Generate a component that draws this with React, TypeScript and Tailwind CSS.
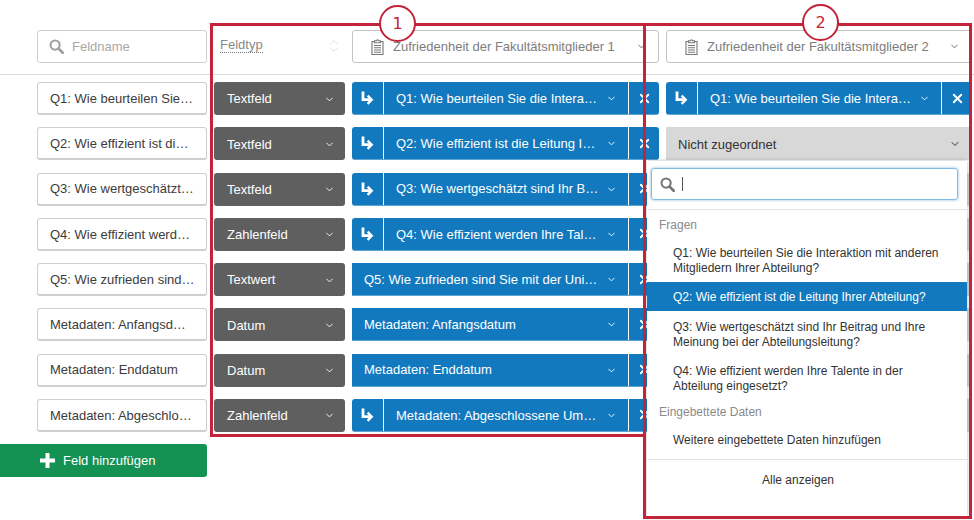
import React from "react";
import { ChevronDown, ChevronsUpDown, X } from "lucide-react";

const Search = ({ c = "#a0a0a0", s = 15 }: { c?: string; s?: number }) => (
  <svg width={s} height={s} viewBox="0 0 16 16" fill="none" stroke={c}>
    <circle cx="6.5" cy="6.5" r="4.9" strokeWidth="2.2" />
    <path d="M10 10l4.6 4.6" strokeWidth="3" strokeLinecap="round" />
  </svg>
);

const Clip = () => (
  <svg width="13" height="16" viewBox="0 0 13 16" fill="none" stroke="#777" strokeWidth="1.1" className="shrink-0">
    <path d="M3.5 2.5H1v13h11v-13H9.5" />
    <path d="M3.5 3.8V1.8h2a1 1 0 0 1 2 0h2v2z" />
    <path d="M3 6.5h7M3 8.8h7M3 11h7M3 13.2h7" />
  </svg>
);

const Arrow = () => (
  <svg width="13" height="14" viewBox="0 0 13 14" fill="none" stroke="white">
    <path d="M2 0.5v8.2h8" strokeWidth="2.8" />
    <path d="M6.6 4.6l4.1 4.1-4.1 4.1" strokeWidth="2.4" />
  </svg>
);

const Mapped = ({ text, icon, className }: { text: string; icon: boolean; className: string }) => (
  <div className={`shrink-0 h-[33px] flex bg-[#1279be] text-white border-b border-[#5da3d3] ${icon ? "rounded-[3px]" : ""} ${className}`}>
    {icon && (
      <div className="w-[32px] shrink-0 flex items-center justify-center border-r border-white">
        <Arrow />
      </div>
    )}
    <div className="flex-1 min-w-0 flex items-center pl-[12px] pr-[11px] pt-[1px]">
      <span className="flex-1 whitespace-nowrap">{text}</span>
      <ChevronDown size={11} strokeWidth={2} className="shrink-0 ml-2" />
    </div>
    <div className="w-[31px] shrink-0 flex items-center justify-center border-l border-white">
      <X size={15} strokeWidth={3} />
    </div>
  </div>
);

const rows: { name: string; type: string; text: string; icon: boolean; second?: string }[] = [
  { name: "Q1: Wie beurteilen Sie…", type: "Textfeld", text: "Q1: Wie beurteilen Sie die Intera…", icon: true, second: "Q1: Wie beurteilen Sie die Intera…" },
  { name: "Q2: Wie effizient ist di…", type: "Textfeld", text: "Q2: Wie effizient ist die Leitung I…", icon: true },
  { name: "Q3: Wie wertgeschätzt…", type: "Textfeld", text: "Q3: Wie wertgeschätzt sind Ihr B…", icon: true },
  { name: "Q4: Wie effizient werd…", type: "Zahlenfeld", text: "Q4: Wie effizient werden Ihre Tal…", icon: true },
  { name: "Q5: Wie zufrieden sind…", type: "Textwert", text: "Q5: Wie zufrieden sind Sie mit der Uni…", icon: false },
  { name: "Metadaten: Anfangsd…", type: "Datum", text: "Metadaten: Anfangsdatum", icon: false },
  { name: "Metadaten: Enddatum", type: "Datum", text: "Metadaten: Enddatum", icon: false },
  { name: "Metadaten: Abgeschlo…", type: "Zahlenfeld", text: "Metadaten: Abgeschlossene Um…", icon: true },
];

const Source = ({ label, className }: { label: string; className: string }) => (
  <div className={`shrink-0 h-[33px] border border-[#c4c4c4] rounded-[3px] flex items-center pl-[18px] pr-[11px] text-[#7d7d7d] ${className}`}>
    <Clip />
    <span className="ml-[9px] flex-1 whitespace-nowrap">{label}</span>
    <ChevronDown size={11} strokeWidth={2} className="shrink-0 text-[#666]" />
  </div>
);

const Item = ({ children, active, className }: { children: React.ReactNode; active?: boolean; className: string }) => (
  <div className={`pl-[26px] pr-[20px] text-[12px] leading-[15px] ${active ? "bg-[#1279be] text-white" : "text-[#333]"} ${className}`}>
    {children}
  </div>
);

const Badge = ({ n, className }: { n: string; className: string }) => (
  <div className={`absolute w-[37px] h-[37px] rounded-full border-[2.5px] border-[#c3243a] bg-white flex items-center justify-center text-[#c3243a] text-[16px] font-['DejaVu_Sans',sans-serif] ${className}`}>
    {n}
  </div>
);

export default function App() {
  return (
    <div className="relative w-[974px] h-[520px] overflow-hidden bg-white text-[13px] text-[#3c3c3c] font-['Liberation_Sans',Arial,sans-serif]">
      <div className="pt-[30px] h-[44px] box-content border-b border-[#dcdcdc]">
        <div className="flex pl-[37px] gap-[7px]">
          <div className="w-[170px] h-[33px] shrink-0 border border-[#cfcfcf] rounded-[3px] flex items-center pl-[11px] text-[#a8a8a8]">
            <Search />
            <span className="ml-[8px]">Feldname</span>
          </div>
          <div className="w-[131px] shrink-0 flex items-start justify-between pl-[6px] pr-[3px] pt-[7px] text-[#8a8a8a]">
            <span className="border-b border-dotted border-[#777] leading-[15px]">Feldtyp</span>
            <ChevronsUpDown size={16} strokeWidth={1} className="text-[#cfcfcf] mt-[1px]" />
          </div>
          <Source label="Zufriedenheit der Fakultätsmitglieder 1" className="w-[307px]" />
          <Source label="Zufriedenheit der Fakultätsmitglieder 2" className="w-[306px]" />
        </div>
      </div>

      <div className="pt-[7px] flex flex-col gap-[12.25px]">
        {rows.map((r, i) => (
          <div key={i} className="flex pl-[37px] gap-[7px] h-[33px]">
            <div className="w-[170px] shrink-0 border border-[#cfcfcf] border-b-2 rounded-[3px] flex items-center pl-[12px] pr-[6px] pt-[1px]">
              <span className="whitespace-nowrap">{r.name}</span>
            </div>
            <div className="w-[131px] shrink-0 bg-[#5f5f5f] rounded-[3px] text-white flex items-center pl-[13px] pr-[10px] pt-[1px]">
              <span className="flex-1">{r.type}</span>
              <ChevronDown size={11} strokeWidth={2} />
            </div>
            <Mapped text={r.text} icon={r.icon} className="w-[307px]" />
            {r.second ? (
              <Mapped text={r.second} icon className="w-[306px]" />
            ) : (
              <div className="w-[306px] shrink-0 h-[33px] bg-[#d8d8d8] text-[#333] flex items-center pl-[12px] pr-[11px] pt-[1px]">
                {i === 1 && <span className="flex-1 whitespace-nowrap">Nicht zugeordnet</span>}
                {i === 1 && <ChevronDown size={12} strokeWidth={2} />}
              </div>
            )}
          </div>
        ))}
        <div className="w-[207px] h-[33px] bg-[#149254] rounded-r-[3px] text-white flex items-center pl-[40px]">
          <svg width="15" height="15" viewBox="0 0 15 15" fill="white"><path d="M5.5 0h4v5.5H15v4H9.5V15h-4V9.5H0v-4h5.5z" /></svg>
          <span className="ml-[8px]">Feld hinzufügen</span>
        </div>
      </div>

      {/* dropdown menu */}
      <div className="absolute left-[647px] top-[161px] w-[320px] h-[356px] bg-white shadow-[0_0_5px_rgba(0,0,0,0.25)]">
        <div className="pl-[4px] pt-[7px] pb-[9px] pr-[9px] border-b border-[#e4e4e4]">
          <div className="h-[32px] border border-[#7fbbe6] rounded-[3px] shadow-[0_0_3px_rgba(18,121,190,0.5)] flex items-center pl-[8px]">
            <Search c="#777" />
            <span className="ml-[7px] w-px h-[14px] bg-[#555]" />
          </div>
        </div>
        <div className="px-[12px] h-[28px] pt-[8px] text-[12px] text-[#8a8a8a] leading-[15px]">Fragen</div>
        <Item className="pt-[8px] pb-[6px]">Q1: Wie beurteilen Sie die Interaktion mit anderen Mitgliedern Ihrer Abteilung?</Item>
        <Item active className="pt-[8px] pb-[6px]">Q2: Wie effizient ist die Leitung Ihrer Abteilung?</Item>
        <Item className="pt-[9px] pb-[6px]">Q3: Wie wertgeschätzt sind Ihr Beitrag und Ihre Meinung bei der Abteilungsleitung?</Item>
        <Item className="pt-[8px] pb-[7px]">Q4: Wie effizient werden Ihre Talente in der Abteilung eingesetzt?</Item>
        <div className="px-[12px] h-[25px] pt-[4px] text-[12px] text-[#8a8a8a] leading-[15px]">Eingebettete Daten</div>
        <Item className="py-[7px]">Weitere eingebettete Daten hinzufügen</Item>
        <div className="mt-[4px] border-t border-[#e4e4e4] pt-[13px] pr-[18px] text-center text-[12px] leading-[15px] text-[#333]">Alle anzeigen</div>
      </div>

      {/* annotations */}
      <div className="absolute left-[210px] top-[23px] w-[436px] h-[414px] border-[3px] border-[#c3243a] pointer-events-none" />
      <div className="absolute left-[643px] top-[23px] w-[329px] h-[496px] border-[3px] border-[#c3243a] pointer-events-none" />
      <Badge n="1" className="left-[379px] top-[5px]" />
      <Badge n="2" className="left-[802px] top-[4px]" />
    </div>
  );
}
